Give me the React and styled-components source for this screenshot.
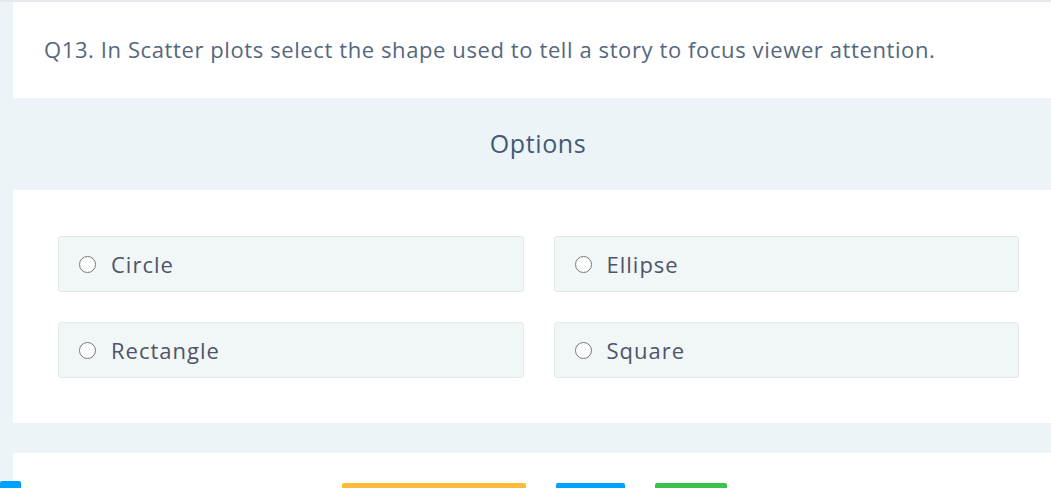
import React, { useState } from "react";
import styled, { createGlobalStyle } from "styled-components";

const GlobalStyle = createGlobalStyle`
  body {
    margin: 0;
    background-color: #edf4f7;
    font-family: "Open Sans", "Lato", sans-serif;
    overflow: hidden;
  }
`;

const options = ["Circle", "Ellipse", "Rectangle", "Square"];

export default function App() {
  const [picked, setPicked] = useState(null);

  return (
    <Page>
      <GlobalStyle />
      <QuestionCard>
        Q13. In Scatter plots select the shape used to tell a story to focus viewer attention.
      </QuestionCard>

      <OptionsHeader>Options</OptionsHeader>

      <OptionsCard>
        {options.map((label) => (
          <OptionBox key={label} onClick={() => setPicked(label)}>
            <Radio $checked={picked === label} />
            <span>{label}</span>
          </OptionBox>
        ))}
      </OptionsCard>

      <Spacer />

      <Footer>
        <EdgeButton />
        <FooterButtons>
          <ActionButton $color="#ffbb38" $width="184px" />
          <ActionButton $color="#00a2ff" $width="69px" />
          <ActionButton $color="#3cc14e" $width="72px" />
        </FooterButtons>
      </Footer>
    </Page>
  );
}

const Page = styled.div`
  width: 100%;
  height: 488px;

  display: flex;
  flex-direction: column;

  border-top: 2px solid #e5e9ed;
  box-sizing: border-box;
`;

const QuestionCard = styled.div`
  height: 96px;

  display: flex;
  align-items: center;

  margin-left: 13px;
  padding: 0 31px 2px;

  background-color: #ffffff;
  color: #55677d;

  font-size: 22px;
  letter-spacing: 0.6px;
  box-sizing: border-box;
  white-space: nowrap;
`;

const OptionsHeader = styled.div`
  height: 92px;

  display: flex;
  justify-content: center;
  align-items: center;

  padding-left: 25px;
  padding-bottom: 2px;

  color: #445a73;
  font-size: 25px;
  letter-spacing: 0.6px;
  box-sizing: border-box;
`;

const OptionsCard = styled.div`
  height: 233px;

  display: grid;
  grid-template-columns: 1fr 1fr;
  grid-auto-rows: 56px;
  column-gap: 30px;
  row-gap: 30px;

  margin-left: 13px;
  padding: 46px 32px 0 45px;

  background-color: #ffffff;
  box-sizing: border-box;
`;

const OptionBox = styled.div`
  display: flex;
  align-items: center;
  gap: 15px;

  padding-left: 20px;

  background-color: #f1f6f7;
  border: 1px solid #e3eaec;
  border-radius: 3px;

  color: #4f5468;
  font-size: 22px;
  letter-spacing: 1px;
  box-sizing: border-box;

  &:hover {
    cursor: pointer;
  }
`;

const Radio = styled.div`
  width: 17px;
  height: 17px;
  flex-shrink: 0;

  border: 1.8px solid #777777;
  border-radius: 50%;
  box-sizing: border-box;

  background-color: ${(p) => (p.$checked ? "#00a2ff" : "#ffffff")};
`;

const Spacer = styled.div`
  height: 30px;
`;

const Footer = styled.div`
  flex: 1;

  display: flex;
  align-items: flex-end;

  margin-left: 13px;

  background-color: #ffffff;
`;

const EdgeButton = styled.div`
  width: 21px;
  height: 7px;

  margin-left: -13px;

  background-color: #00a2ff;
  border-radius: 2px 2px 0 0;
`;

const FooterButtons = styled.div`
  display: flex;
  gap: 30px;

  margin-left: 321px;
`;

const ActionButton = styled.div`
  width: ${(p) => p.$width};
  height: 5px;

  background-color: ${(p) => p.$color};
  border-radius: 2px 2px 0 0;
`;
